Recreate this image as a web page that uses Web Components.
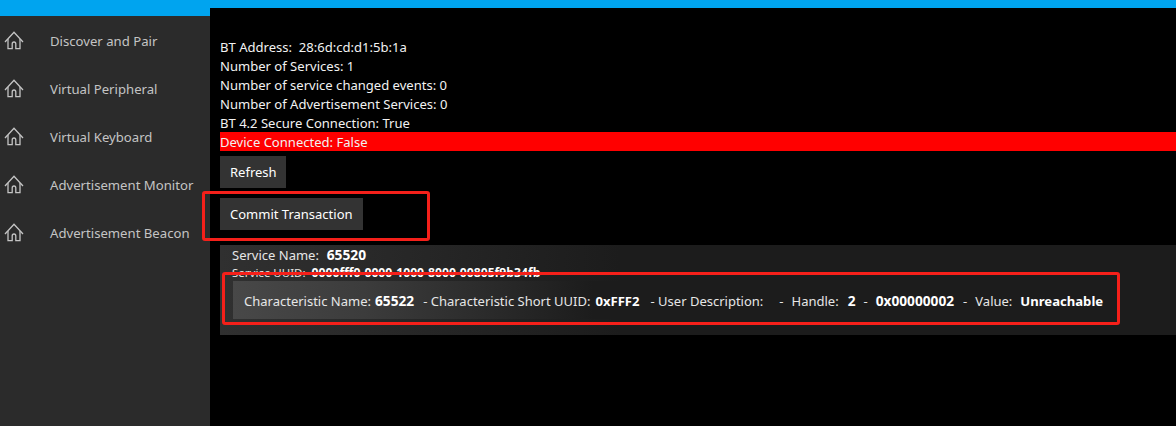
<!DOCTYPE html>
<html>
<head>
<meta charset="utf-8">
<title>BT device</title>
<style>
html, body { margin: 0; padding: 0; background: #000; }
body { width: 1176px; height: 426px; overflow: hidden; font-family: "Noto Sans", "Open Sans", sans-serif; }
</style>
</head>
<body>
<bt-app>
  <nav-pane slot="nav">
    <nav-item>Discover and Pair</nav-item>
    <nav-item>Virtual Peripheral</nav-item>
    <nav-item>Virtual Keyboard</nav-item>
    <nav-item>Advertisement Monitor</nav-item>
    <nav-item>Advertisement Beacon</nav-item>
  </nav-pane>
  <device-page slot="main"></device-page>
</bt-app>
<script>
class BtApp extends HTMLElement {
  constructor() {
    super();
    this.attachShadow({mode: 'open'});
    this.shadowRoot.innerHTML = `
    <style>
      :host { display: block; position: relative; width: 1176px; height: 426px; background: #000; overflow: hidden; }
      .top { height: 8px; background: #00a4ef; }
      .body { display: flex; height: 418px; }
      ::slotted([slot=nav]) { width: 210px; flex: none; }
      ::slotted([slot=main]) { flex: 1; min-width: 0; }
    </style>
    <div class="top"></div>
    <div class="body">
      <slot name="nav"></slot>
      <slot name="main"></slot>
    </div>`;
  }
}
customElements.define('bt-app', BtApp);

class NavPane extends HTMLElement {
  constructor() {
    super();
    this.attachShadow({mode: 'open'});
    this.shadowRoot.innerHTML = `
    <style>
      :host { display: block; background: #2b2b2b; border-top: 8px solid #00a4ef; box-sizing: border-box; }
    </style>
    <slot></slot>`;
  }
}
customElements.define('nav-pane', NavPane);

class NavItem extends HTMLElement {
  constructor() {
    super();
    this.attachShadow({mode: 'open'});
    this.shadowRoot.innerHTML = `
    <style>
      :host { display: flex; align-items: center; height: 48px; color: #c4c4c4; font-size: 13.15px; }
      svg { width: 20px; height: 20px; margin-left: 4px; flex: none; }
      span { margin-left: 26px; white-space: nowrap; position: relative; top: 1px; }
    </style>
    <svg viewBox="0 0 20 20" fill="none" stroke="#c4c4c4" stroke-width="1.3">
      <path d="M1 12 L10 2.2 L19 12"/>
      <path d="M4 9 V18.6 H8.2 V14 Q8.2 12 10 12 Q11.8 12 11.8 14 V18.6 H16 V9"/>
    </svg>
    <span><slot></slot></span>`;
  }
}
customElements.define('nav-item', NavItem);

class FlatButton extends HTMLElement {
  constructor() {
    super();
    this.attachShadow({mode: 'open'});
    this.shadowRoot.innerHTML = `
    <style>
      :host { display: inline-flex; align-items: center; height: 32px; padding: 0 10px; background: #333; color: #fff; font-size: 13px; white-space: nowrap; }
    </style>
    <slot></slot>`;
  }
}
customElements.define('flat-button', FlatButton);

class CharItem extends HTMLElement {
  constructor() {
    super();
    this.attachShadow({mode: 'open'});
    this.shadowRoot.innerHTML = `
    <style>
      :host { display: flex; align-items: center; box-sizing: border-box; height: 38px; margin-left: 13px; padding: 1px 0 0 11px; color: #e6e6e6; font-size: 13px; white-space: nowrap;
        background: linear-gradient(90deg, #484848 0, #3c3c3c 130px, #1c1c1c 360px); }
      ::slotted(b) { color: #fff; font-size: 13.1px; }
      ::slotted(b.num) { font-size: 13.7px; }
    </style>
    <slot></slot>`;
  }
}
customElements.define('char-item', CharItem);

class ServicePanel extends HTMLElement {
  constructor() {
    super();
    this.attachShadow({mode: 'open'});
    this.shadowRoot.innerHTML = `
    <style>
      :host { display: block; margin: 15px 0 0 10px; height: 90px; box-sizing: border-box; padding-top: 1px; color: #e6e6e6; font-size: 13px;
        background: linear-gradient(90deg, #303030 0, #2a2a2a 130px, #1c1c1c 400px); }
      .head { height: 31px; margin-bottom: 4px; overflow: hidden; padding-left: 12px; line-height: 18px; }
      .name { white-space: pre; }
      .name b { font-size: 13.8px; margin-left: 1px; color: #fff; }
      .uuid { white-space: pre; font-size: 11.5px; }
      .uuid b { font-size: 12.2px; color: #fff; }
    </style>
    <div class="head">
      <div class="name">Service Name:  <b>65520</b></div>
      <div class="uuid">Service UUID:  <b>0000fff0-0000-1000-8000-00805f9b34fb</b></div>
    </div>
    <slot></slot>`;
  }
}
customElements.define('service-panel', ServicePanel);

class DevicePage extends HTMLElement {
  constructor() {
    super();
    this.attachShadow({mode: 'open'});
    this.shadowRoot.innerHTML = `
    <style>
      :host { display: block; position: relative; color: #f2f2f2; font-size: 13.05px; }
      .info { padding: 29px 0 0 10px; }
      .row { height: 19px; line-height: 21px; white-space: pre; }
      .bad { background: #f00; }
      flat-button { margin-left: 10px; display: flex; width: max-content; }
      .refresh { margin-top: 5px; width: 46px; }
      .commit { margin-top: 10px; }
      .mark { position: absolute; border: 3px solid #f5201a; border-radius: 3px; box-sizing: border-box; }
      .m1 { left: -8px; top: 183px; width: 228px; height: 50px; }
      .m2 { left: 12px; top: 264px; width: 898px; height: 53px; }
    </style>
    <div class="info">
      <div class="row">BT Address:  28:6d:cd:d1:5b:1a</div>
      <div class="row">Number of Services: 1</div>
      <div class="row">Number of service changed events: 0</div>
      <div class="row">Number of Advertisement Services: 0</div>
      <div class="row">BT 4.2 Secure Connection: True</div>
      <div class="row bad">Device Connected: False</div>
    </div>
    <flat-button class="refresh">Refresh</flat-button>
    <flat-button class="commit">Commit Transaction</flat-button>
    <service-panel>
      <char-item>
        <span>Characteristic Name:</span>
        <b class="num" style="margin-left:4px">65522</b>
        <span style="margin-left:9px">- Characteristic Short UUID:</span>
        <b style="margin-left:5px">0xFFF2</b>
        <span style="margin-left:11px">- User Description:</span>
        <span style="margin-left:16px">-</span>
        <span style="margin-left:8px">Handle:</span>
        <b class="num" style="margin-left:9px">2</b>
        <span style="margin-left:8px">-</span>
        <b class="num" style="margin-left:8px">0x00000002</b>
        <span style="margin-left:9px">-</span>
        <span style="margin-left:8px">Value:</span>
        <b style="margin-left:8px">Unreachable</b>
      </char-item>
    </service-panel>
    <div class="mark m1"></div>
    <div class="mark m2"></div>`;
  }
}
customElements.define('device-page', DevicePage);
</script>
</body>
</html>
